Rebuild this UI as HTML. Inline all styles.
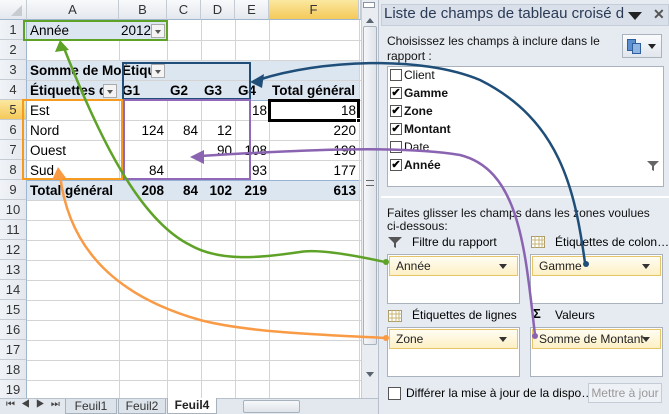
<!DOCTYPE html>
<html><head><meta charset="utf-8"><style>
*{margin:0;padding:0;box-sizing:border-box}
body{width:669px;height:414px;overflow:hidden;background:#fff;font-family:"Liberation Sans",sans-serif;font-size:13px;position:relative}
.a{position:absolute;white-space:nowrap}
.ch{position:absolute;top:0;height:20px;background:linear-gradient(#f8f9fb,#e4e8ee);border-right:1px solid #c5cbd3;border-bottom:1px solid #9eb6ce;text-align:center;line-height:20px;color:#333;font-size:13px}
.rh{position:absolute;left:0;width:27px;height:20px;background:linear-gradient(90deg,#f0f3f7,#e4e8ee);border-bottom:1px solid #c5cbd3;border-right:1px solid #9eb6ce;text-align:center;line-height:20px;color:#333;font-size:13px}
.hl{background:linear-gradient(#fbe8a0,#f5c95a)!important}
.c{position:absolute;height:20px;line-height:20px;font-size:13.5px;color:#000;white-space:nowrap}
.r{text-align:right}
.b{font-weight:bold}
.dd{position:absolute;width:14px;height:14px;border:1px solid #aaa;background:#f4f4f4}
.dd:after{content:"";position:absolute;left:3px;top:5px;border:3.5px solid transparent;border-top:4px solid #555}
.fld{position:absolute;height:20px;border:1px solid #e6c46a;background:linear-gradient(#fffdf3,#fdf0c4);font-size:12px;line-height:18px;padding-left:6px;color:#222;white-space:nowrap}
.fld:after{content:"";position:absolute;right:10px;top:7px;border:4px solid transparent;border-top:5px solid #333}
.zone{position:absolute;width:133px;height:50px;border:1px solid #a9b2bd;background:#fff}
.cb{position:absolute;width:12px;height:12px;border:1px solid #555;background:#fff;font-size:11px;font-weight:bold;line-height:10px;text-align:center}
.fl{position:absolute;left:404px;font-size:12px;color:#111}
</style></head><body>
<svg class="a" style="left:0;top:0" width="361" height="400">
<g stroke="#d4d4d4" stroke-width="1">
<line x1="119.5" y1="20" x2="119.5" y2="400"/><line x1="167.5" y1="20" x2="167.5" y2="400"/><line x1="201.5" y1="20" x2="201.5" y2="400"/><line x1="235.5" y1="20" x2="235.5" y2="400"/><line x1="269.5" y1="20" x2="269.5" y2="400"/><line x1="359.5" y1="20" x2="359.5" y2="400"/>
</g>
<rect x="27" y="20" width="140" height="20" fill="#dce6f1"/>
<rect x="27" y="60" width="332" height="40" fill="#dce6f1"/>
<rect x="27" y="180" width="332" height="20" fill="#dce6f1"/>
<g stroke="#d4d4d4">
<line x1="27" y1="40.5" x2="361" y2="40.5"/><line x1="27" y1="60.5" x2="361" y2="60.5"/><line x1="27" y1="80.5" x2="361" y2="80.5"/><line x1="27" y1="100.5" x2="361" y2="100.5"/><line x1="27" y1="120.5" x2="361" y2="120.5"/><line x1="27" y1="140.5" x2="361" y2="140.5"/><line x1="27" y1="160.5" x2="361" y2="160.5"/><line x1="27" y1="180.5" x2="361" y2="180.5"/><line x1="27" y1="200.5" x2="361" y2="200.5"/><line x1="27" y1="220.5" x2="361" y2="220.5"/><line x1="27" y1="240.5" x2="361" y2="240.5"/><line x1="27" y1="260.5" x2="361" y2="260.5"/><line x1="27" y1="280.5" x2="361" y2="280.5"/><line x1="27" y1="300.5" x2="361" y2="300.5"/><line x1="27" y1="320.5" x2="361" y2="320.5"/><line x1="27" y1="340.5" x2="361" y2="340.5"/><line x1="27" y1="360.5" x2="361" y2="360.5"/><line x1="27" y1="380.5" x2="361" y2="380.5"/>
</g>
<line x1="27" y1="100.5" x2="359" y2="100.5" stroke="#95b3d7"/>
<line x1="27" y1="180.5" x2="359" y2="180.5" stroke="#95b3d7"/>
</svg>
<div class="ch" style="left:0;width:27px"><svg width="27" height="20"><polygon points="22,5 22,16 11,16" fill="#c7ccd3"/></svg></div>
<div class="ch" style="left:27px;width:92px">A</div>
<div class="ch" style="left:119px;width:48px">B</div>
<div class="ch" style="left:167px;width:34px">C</div>
<div class="ch" style="left:201px;width:34px">D</div>
<div class="ch" style="left:235px;width:34px">E</div>
<div class="ch hl" style="left:269px;width:90px">F</div>
<div class="ch" style="left:359px;width:2px"></div>
<div class="rh" style="top:20px">1</div><div class="rh" style="top:40px">2</div><div class="rh" style="top:60px">3</div><div class="rh" style="top:80px">4</div><div class="rh hl" style="top:100px">5</div><div class="rh" style="top:120px">6</div><div class="rh" style="top:140px">7</div><div class="rh" style="top:160px">8</div><div class="rh" style="top:180px">9</div><div class="rh" style="top:200px">10</div><div class="rh" style="top:220px">11</div><div class="rh" style="top:240px">12</div><div class="rh" style="top:260px">13</div><div class="rh" style="top:280px">14</div><div class="rh" style="top:300px">15</div><div class="rh" style="top:320px">16</div><div class="rh" style="top:340px">17</div><div class="rh" style="top:360px">18</div><div class="rh" style="top:380px">19</div>
<div class="c" style="left:30px;top:21px">Année</div>
<div class="c" style="left:121px;top:21px">2012</div>
<div class="dd" style="left:151px;top:24px"></div>
<div class="c b" style="left:30px;top:61px;width:92px;overflow:hidden">Somme de Mo</div>
<div class="c b" style="left:122px;top:61px">Étiqu</div>
<div class="dd" style="left:151px;top:64px"></div>
<div class="c b" style="left:30px;top:81px;width:76px;overflow:hidden">Étiquettes de</div>
<div class="dd" style="left:103px;top:84px"></div>
<div class="c b" style="left:122px;top:81px">G1</div><div class="c b" style="left:170px;top:81px">G2</div><div class="c b" style="left:204px;top:81px">G3</div><div class="c b" style="left:238px;top:81px">G4</div><div class="c b" style="left:272px;top:81px">Total général</div>
<div class="c" style="left:30px;top:101px">Est</div><div class="c" style="left:30px;top:121px">Nord</div><div class="c" style="left:30px;top:141px">Ouest</div><div class="c" style="left:30px;top:161px">Sud</div>
<div class="c b" style="left:30px;top:181px">Total général</div>
<div class="c r" style="left:235px;width:32px;top:101px">18</div>
<div class="c r" style="left:269px;width:87px;top:101px">18</div>
<div class="c r" style="left:119px;width:45px;top:121px">124</div><div class="c r" style="left:167px;width:31px;top:121px">84</div><div class="c r" style="left:201px;width:31px;top:121px">12</div><div class="c r" style="left:269px;width:87px;top:121px">220</div>
<div class="c r" style="left:201px;width:31px;top:141px">90</div><div class="c r" style="left:235px;width:32px;top:141px">108</div><div class="c r" style="left:269px;width:87px;top:141px">198</div>
<div class="c r" style="left:119px;width:45px;top:161px">84</div><div class="c r" style="left:235px;width:32px;top:161px">93</div><div class="c r" style="left:269px;width:87px;top:161px">177</div>
<div class="c r b" style="left:119px;width:45px;top:181px">208</div><div class="c r b" style="left:167px;width:31px;top:181px">84</div><div class="c r b" style="left:201px;width:31px;top:181px">102</div><div class="c r b" style="left:235px;width:32px;top:181px">219</div><div class="c r b" style="left:269px;width:87px;top:181px">613</div>
<div class="a" style="left:268px;top:99px;width:92px;height:23px;border:3px solid #000"></div>
<div class="a" style="left:356px;top:118px;width:5px;height:5px;background:#000;border:1px solid #fff"></div>
<div class="a" style="left:361px;top:0;width:17px;height:400px;background:#e9edf2;border-left:1px solid #c9ced6"></div>
<div class="a" style="left:363px;top:2px;width:12px;height:6px;border:1px solid #8a94a0;background:#fff"></div>
<div class="a" style="left:366px;top:14px;border:4px solid transparent;border-bottom:5px solid #5a6470"></div>
<div class="a" style="left:363px;top:26px;width:14px;height:319px;border:1px solid #a8b2bd;border-radius:2px;background:linear-gradient(90deg,#f4f6f9,#dfe4ea)"></div>
<div class="a" style="left:366px;top:180px;width:8px;height:6px;border-top:1px solid #666;border-bottom:1px solid #666"></div>
<div class="a" style="left:366px;top:372px;border:4px solid transparent;border-top:5px solid #5a6470"></div>
<div class="a" style="left:0;top:398px;width:378px;height:16px;background:#e3e8ef;border-top:1px solid #b7c0cb"></div>
<div class="a" style="left:6px;top:399px;font-size:10px;color:#444;letter-spacing:6px">⏮◀▶⏭</div>
<div class="a" style="left:65px;top:399px;width:52px;height:15px;background:#dde3ea;border:1px solid #a8b2bd;border-top:none;font-size:12px;text-align:center;color:#333">Feuil1</div>
<div class="a" style="left:118px;top:399px;width:48px;height:15px;background:#dde3ea;border:1px solid #a8b2bd;border-top:none;font-size:12px;text-align:center;color:#333">Feuil2</div>
<div class="a" style="left:167px;top:398px;width:50px;height:16px;background:#fff;border:1px solid #a8b2bd;border-top:none;font-size:12px;font-weight:bold;text-align:center;color:#222">Feuil4</div>
<div class="a" style="left:243px;top:400px;width:57px;height:13px;border:1px solid #a8b2bd;border-radius:2px;background:linear-gradient(#f6f8fa,#dfe4ea)"></div>
<div class="a" style="left:378px;top:0;width:291px;height:414px;background:#e6ebf2;border-left:1px solid #b7c0cb"></div>
<div class="a" style="left:381px;top:4px;width:288px;height:22px;background:#d9e0ea;border:1px solid #c5cdd8"></div>
<div class="a" style="left:384px;top:5px;font-size:15px;color:#2a3a55;width:240px;overflow:hidden">Liste de champs de tableau croisé dynamique</div>
<div class="a" style="left:628px;top:12px;border:7px solid transparent;border-top:8px solid #222;border-bottom:none"></div>
<div class="a" style="left:653px;top:6px;font-size:14px;color:#555;font-weight:bold">✕</div>
<div class="a" style="left:387px;top:34px;font-size:12px;color:#111;line-height:15px">Choisissez les champs à inclure dans le<br>rapport :</div>
<div class="a" style="left:622px;top:34px;width:40px;height:24px;border:1px solid #aab3be;background:linear-gradient(#fafbfd,#e1e6ed)"></div>
<div class="a" style="left:627px;top:39px;width:9px;height:12px;background:#5b8fd0;border:1px solid #2d5f9e"></div>
<div class="a" style="left:632px;top:43px;width:9px;height:11px;background:#8fb4e0;border:1px solid #2d5f9e"></div>
<div class="a" style="left:648px;top:44px;border:4px solid transparent;border-top:5px solid #222;border-bottom:none"></div>
<div class="a" style="left:387px;top:66px;width:277px;height:121px;background:#fff;border:1px solid #a9b2bd"></div>
<div class="cb" style="left:390px;top:69px"></div><div class="fl" style="top:68px">Client</div>
<div class="cb" style="left:390px;top:87px">✔</div><div class="fl b" style="top:86px">Gamme</div>
<div class="cb" style="left:390px;top:105px">✔</div><div class="fl b" style="top:104px">Zone</div>
<div class="cb" style="left:390px;top:123px">✔</div><div class="fl b" style="top:122px">Montant</div>
<div class="cb" style="left:390px;top:141px"></div><div class="fl" style="top:140px">Date</div>
<div class="cb" style="left:390px;top:159px">✔</div><div class="fl b" style="top:158px">Année</div>
<svg class="a" style="left:646px;top:160px" width="14" height="12"><path d="M1 1H13L8 6V11L6 10V6Z" fill="#666"/></svg>
<div class="a" style="left:381px;top:196px;width:288px;height:2px;background:#fff"></div>
<div class="a" style="left:387px;top:207px;font-size:12px;color:#111;line-height:13px">Faites glisser les champs dans les zones voulues<br>ci-dessous:</div>
<svg class="a" style="left:388px;top:237px" width="14" height="11"><path d="M0 0H14L8 6V11L6 10V6Z" fill="#555"/></svg>
<div class="a" style="left:412px;top:235px;font-size:12px">Filtre du rapport</div>
<svg class="a" style="left:531px;top:236px" width="14" height="12"><rect x=".5" y=".5" width="13" height="11" fill="#fff" stroke="#aa9a66"/><path d="M0 4H14M0 8H14M4 0V12M8 0V12M11 0V12" stroke="#c8b47a"/></svg>
<div class="a" style="left:555px;top:235px;font-size:12px">Étiquettes de colon…</div>
<div class="zone" style="left:387px;top:254px"></div>
<div class="zone" style="left:530px;top:254px"></div>
<div class="fld" style="left:389px;top:256px;width:129px">Année</div>
<div class="fld" style="left:532px;top:256px;width:129px">Gamme</div>
<svg class="a" style="left:388px;top:310px" width="14" height="12"><rect x=".5" y=".5" width="13" height="11" fill="#fff" stroke="#aa9a66"/><path d="M0 4H14M0 8H14M4 0V12M8 0V12M11 0V12" stroke="#c8b47a"/></svg>
<div class="a" style="left:412px;top:308px;font-size:12px">Étiquettes de lignes</div>
<div class="a" style="left:533px;top:306px;font-size:13px;font-weight:bold">Σ</div>
<div class="a" style="left:555px;top:308px;font-size:12px">Valeurs</div>
<div class="zone" style="left:387px;top:327px"></div>
<div class="zone" style="left:530px;top:327px"></div>
<div class="fld" style="left:389px;top:329px;width:129px">Zone</div>
<div class="fld" style="left:532px;top:329px;width:129px">Somme de Montant</div>
<div class="a" style="left:388px;top:387px;width:13px;height:13px;border:1px solid #555;background:#fff"></div>
<div class="a" style="left:406px;top:386px;font-size:12px">Différer la mise à jour de la dispo…</div>
<div class="a" style="left:588px;top:383px;width:74px;height:20px;border:1px solid #c5ccd5;background:#eef1f5;font-size:12px;color:#999;text-align:center;line-height:18px">Mettre à jour</div>
<svg class="a" style="left:0;top:0" width="669" height="414">
<rect x="24" y="21" width="143" height="19" fill="none" stroke="#5fa228" stroke-width="2"/>
<rect x="123" y="63" width="127" height="36" fill="none" stroke="#1f4e79" stroke-width="2"/>
<rect x="23" y="100" width="99" height="79" fill="none" stroke="#f59b20" stroke-width="2"/>
<rect x="124" y="100" width="126" height="79" fill="none" stroke="#9069b8" stroke-width="2"/>
<g fill="none" stroke-width="2.5">
<path d="M385 262C330 250 310 250 300 252C260 258 220 262 190 245C140 220 100 140 64 48" stroke="#5fa228"/>
<path d="M385 338C330 335 250 333 200 320C130 300 70 260 60 175" stroke="#f99a45"/>
<path d="M585 263C575 190 560 120 480 80C420 55 320 60 258 80" stroke="#1f4e79"/>
<path d="M535 335C525 250 520 170 460 155C400 145 300 150 200 156" stroke="#8a63b1"/>
</g>
<path d="M60 40L55 52L69 50Z" fill="#5fa228"/>
<path d="M58 167L52 180L66 178Z" fill="#f99a45"/>
<path d="M250 82L264 74L262 88Z" fill="#1f4e79"/>
<path d="M190 157L204 150L204 164Z" fill="#8a63b1"/>
<circle cx="386" cy="262" r="3" fill="#5fa228"/>
<circle cx="386" cy="338" r="3" fill="#f99a45"/>
<circle cx="586" cy="264" r="3" fill="#1f4e79"/>
<circle cx="535" cy="336" r="3" fill="#8a63b1"/>
</svg>
</body></html>
